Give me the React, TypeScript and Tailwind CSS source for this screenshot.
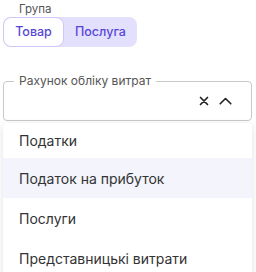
import React from "react";

export default function App() {
  const items = ["Податки", "Податок на прибуток", "Послуги", "Представницькі витрати"];
  return (
    <div className="w-[256px] h-[272px] overflow-hidden bg-white relative" style={{ fontFamily: "Inter, 'Noto Sans', sans-serif" }}>
      <div className="pl-[19px] pt-[2px] text-[11.5px] leading-[14px] text-[#555]">Група</div>
      <div className="ml-[3px] mt-[1px] flex h-[30px] w-[134px] rounded-[8px] bg-[#e3e0fd] text-[12.5px] font-medium text-[#5747d6]">
        <div className="flex w-[61px] items-center justify-center rounded-[8px] border border-[#cdc7fb] bg-white">Товар</div>
        <div className="flex flex-1 items-center justify-center">Послуга</div>
      </div>
      <fieldset className="ml-[3px] mt-[28px] h-[46px] w-[249px] rounded-[4px] border border-[#c9c9c9] px-[10px]">
        <legend className="px-[5px] text-[12px] leading-[12px] text-[#555]">Рахунок обліку витрат</legend>
        <div className="flex h-[27px] items-center justify-end gap-[10px] pr-[9px]">
          <svg width="10" height="10" viewBox="0 0 10 10" className="text-[#222]">
            <path d="M1.5 1.5 L8.5 8.5 M8.5 1.5 L1.5 8.5" stroke="currentColor" strokeWidth="1.7" strokeLinecap="round" />
          </svg>
          <svg width="13" height="8" viewBox="0 0 13 8" className="text-[#222]">
            <path d="M1.2 6.8 L6.5 1.5 L11.8 6.8" stroke="currentColor" strokeWidth="1.6" fill="none" strokeLinecap="round" strokeLinejoin="round" />
          </svg>
        </div>
      </fieldset>
      <div className="absolute left-[3px] top-[123px] w-[249px] rounded-[4px] bg-white shadow-[0_2px_8px_rgba(0,0,0,0.12)]">
        {items.map((t, i) => (
          <div
            key={t}
            className={`flex items-center pl-[16px] text-[14px] text-[#333] ${i === 0 ? "h-[35px]" : "h-[40px]"} ${i === 1 ? "bg-[#f3f4fc]" : ""}`}
          >
            {t}
          </div>
        ))}
      </div>
    </div>
  );
}
